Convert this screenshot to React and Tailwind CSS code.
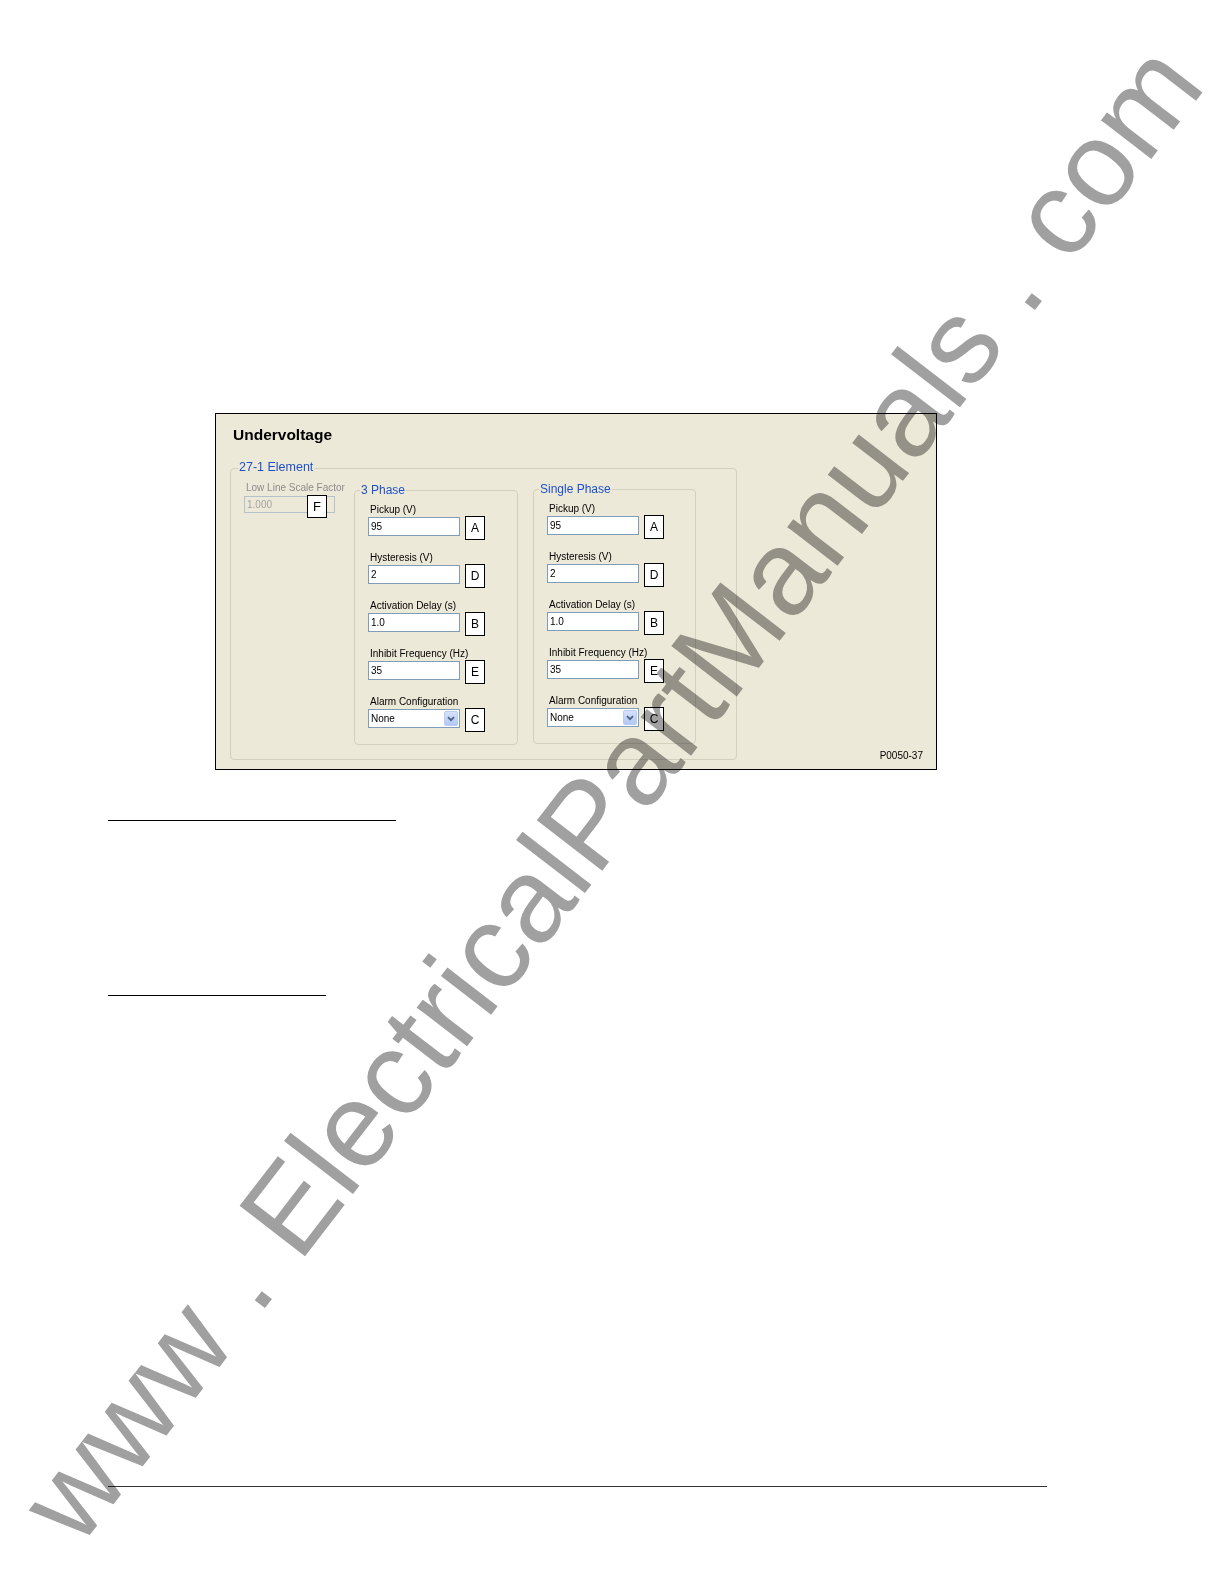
import React from 'react';

const PANEL_BG = 'bg-[#ECE9D8]';

const rows = [
  { label: 'Pickup (V)', value: '95', tag: 'A' },
  { label: 'Hysteresis (V)', value: '2', tag: 'D' },
  { label: 'Activation Delay (s)', value: '1.0', tag: 'B' },
  { label: 'Inhibit Frequency (Hz)', value: '35', tag: 'E' },
  { label: 'Alarm Configuration', value: 'None', tag: 'C', select: true },
];

/* black annotation square next to each control */
const Tag = ({ children }) => (
  <div className="ml-[5px] -mt-px flex h-[24px] w-[20px] items-center justify-center border border-black bg-white text-[12px] leading-none text-black">
    {children}
  </div>
);

const Field = ({ label, value, tag, select }) => (
  <div className="flex flex-col">
    <span className="pl-[2px] text-[10px] leading-[12px] text-black">{label}</span>
    <div className="mt-px flex items-start">
      <div className="flex h-[19px] w-[92px] items-center border border-[#7f9db9] bg-white pl-[2px] text-[10px] text-black">
        <span className="flex-1">{value}</span>
        {select && (
          <div className="mr-px flex h-[15px] w-[14px] items-center justify-center rounded-[2px] border border-[#b7cbf3] bg-gradient-to-b from-[#d6e2fc] to-[#b2c7f4]">
            <svg width="8" height="6" viewBox="0 0 8 6">
              <path d="M1 1.2 L4 4.2 L7 1.2" fill="none" stroke="#4d6185" strokeWidth="1.8" />
            </svg>
          </div>
        )}
      </div>
      <Tag>{tag}</Tag>
    </div>
  </div>
);

const SubGroup = ({ title, className }) => (
  <div className={`relative h-[255px] rounded-[4px] border border-[#d4d0c0] ${className}`}>
    <span className={`absolute -top-[8px] left-[5px] px-px text-[12px] leading-[14px] text-[#1f50c8] ${PANEL_BG}`}>
      {title}
    </span>
    <div className="flex flex-col gap-[12px] pl-[13px] pt-[13px]">
      {rows.map((r) => (
        <Field key={r.label} {...r} />
      ))}
    </div>
  </div>
);

export default function App() {
  return (
    <div
      className="relative h-[1584px] w-[1224px] overflow-hidden bg-white"
      style={{ fontFamily: '"Liberation Sans", Arial, sans-serif' }}
    >
      <div className="pl-[215px] pt-[413px]">
        {/* screenshot panel */}
        <div className={`flex h-[357px] w-[722px] flex-col border border-black ${PANEL_BG}`}>
          <div className="pl-[17px] pt-[12px] text-[15.5px] font-bold leading-[18px] text-black">Undervoltage</div>

          <div className="mt-[24px] flex items-end pl-[14px] pr-[13px]">
            {/* 27-1 Element group */}
            <div className="relative flex h-[292px] w-[507px] rounded-[4px] border border-[#d4d0c0]">
              <span className={`absolute -top-[9px] left-[7px] px-px text-[12.5px] leading-[15px] text-[#1f50c8] ${PANEL_BG}`}>
                27-1 Element
              </span>

              <div className="w-[123px] pl-[13px] pt-[13px]">
                <div className="ml-[2px] text-[10px] leading-[12px] text-[#8c8c8c]">Low Line Scale Factor</div>
                <div className="relative mt-[2px] flex h-[17px] w-[91px] items-center border border-[#b4c0cc] pl-[2px] text-[10px] text-[#a3a3a3]">
                  1.000
                  <div className="absolute -top-[2px] left-[62px] flex h-[23px] w-[20px] items-center justify-center border border-black bg-white text-[13px] text-black">
                    F
                  </div>
                </div>
              </div>

              <SubGroup title="3 Phase" className="mt-[21px] w-[164px]" />
              <SubGroup title="Single Phase" className="ml-[15px] mt-[20px] w-[163px]" />
            </div>

            <span className="-mb-[2px] ml-auto text-[10px] leading-[12px] text-black">P0050-37</span>
          </div>
        </div>

        {/* document rules */}
        <div className="ml-[-107px] mt-[50px] h-px w-[288px] bg-black" />
        <div className="ml-[-107px] mt-[174px] h-px w-[218px] bg-black" />
        <div className="ml-[-107px] mt-[490px] h-px w-[939px] bg-[#333333]" />
      </div>

      {/* diagonal watermark */}
      <div
        className="pointer-events-none absolute left-[610px] top-[792px] whitespace-nowrap text-[120px] leading-none text-[#a0a0a0] mix-blend-multiply"
        style={{ transform: 'translate(-50%, -50%) rotate(-52.35deg)' }}
      >
        www . ElectricalPartManuals . com
      </div>
    </div>
  );
}
